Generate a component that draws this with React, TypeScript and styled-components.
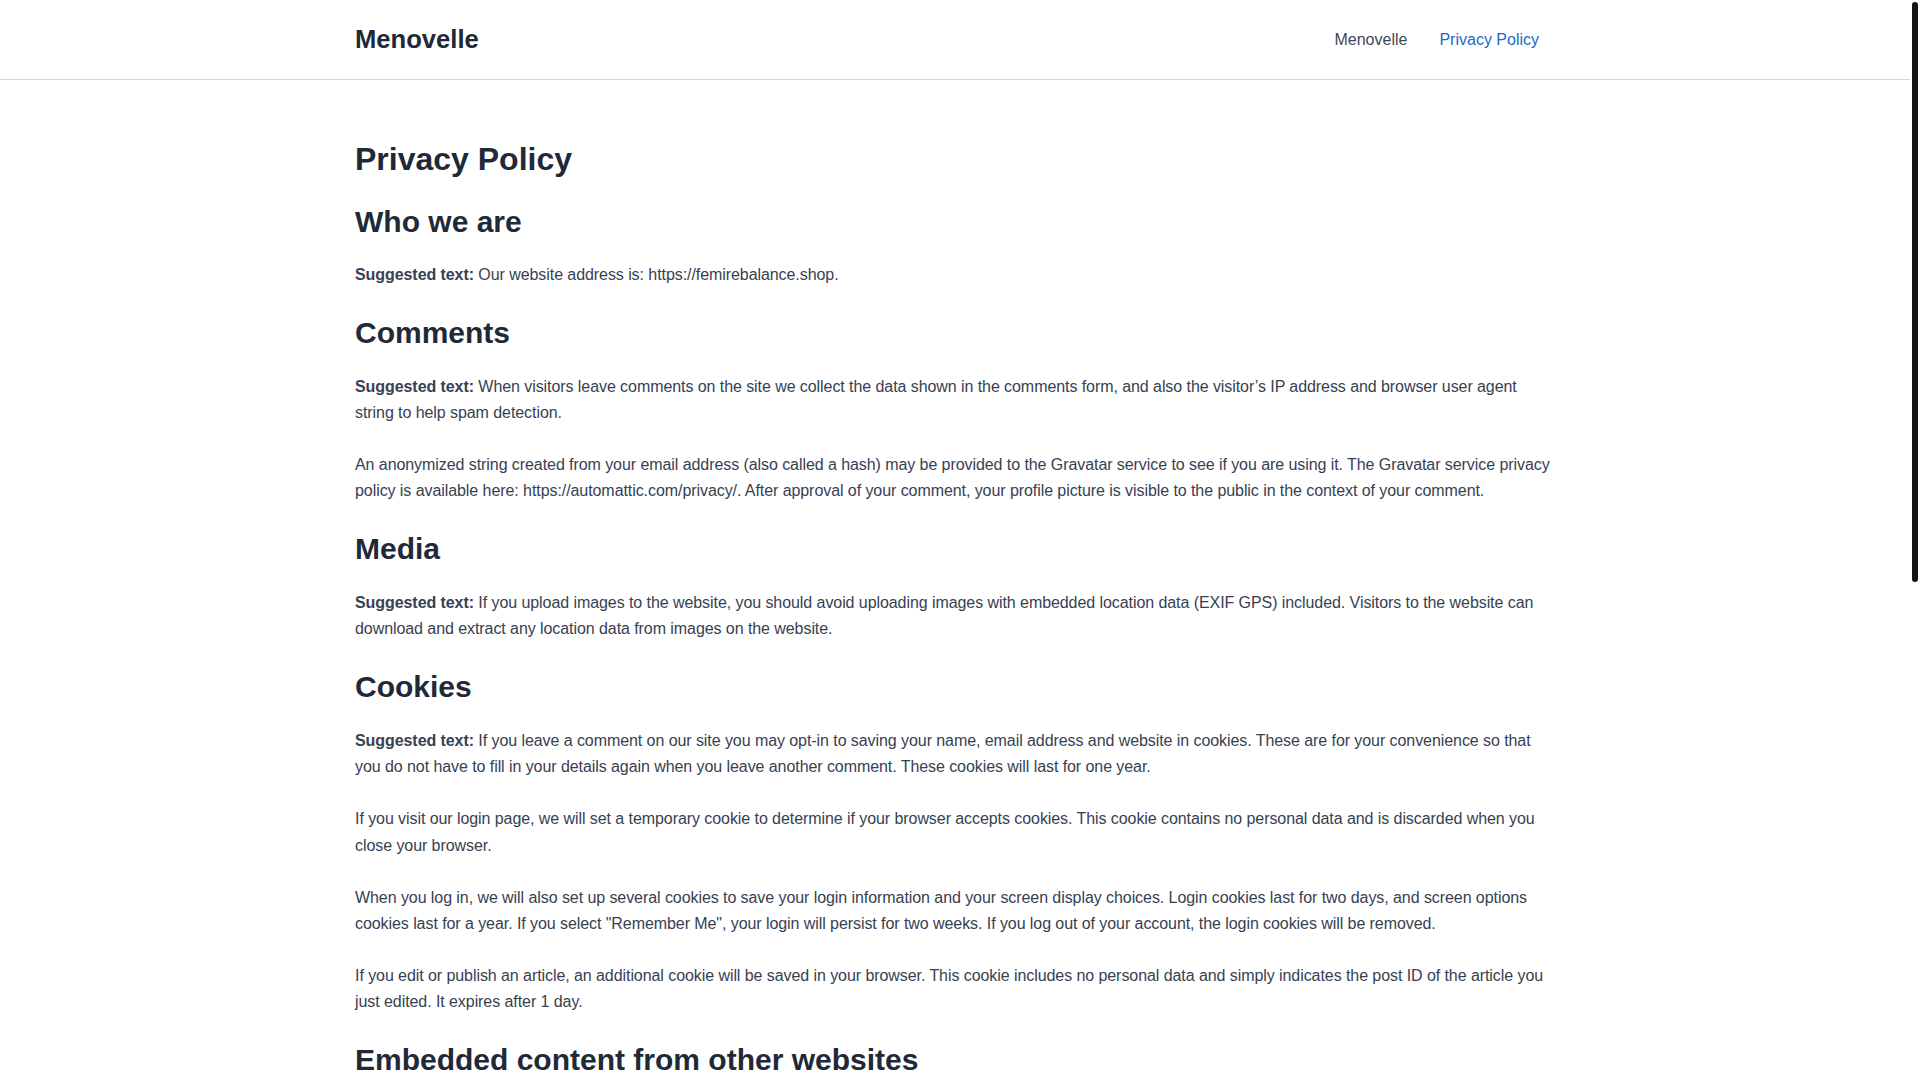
import styled, { createGlobalStyle } from 'styled-components'

const GlobalStyle = createGlobalStyle`
  html, body {
    margin: 0;
    padding: 0;
    background: #ffffff;
  }
  body {
    padding-right: 10px;
    font-family: "Liberation Sans", Arial, Helvetica, sans-serif;
    color: #374151;
    -webkit-font-smoothing: antialiased;
  }
`

type Section = {
  title: string
  paragraphs: { lead?: string; text: string }[]
}

const sections: Section[] = [
  {
    title: 'Who we are',
    paragraphs: [
      { lead: 'Suggested text:', text: 'Our website address is: https://femirebalance.shop.' },
    ],
  },
  {
    title: 'Comments',
    paragraphs: [
      {
        lead: 'Suggested text:',
        text: 'When visitors leave comments on the site we collect the data shown in the comments form, and also the visitor’s IP address and browser user agent string to help spam detection.',
      },
      {
        text: 'An anonymized string created from your email address (also called a hash) may be provided to the Gravatar service to see if you are using it. The Gravatar service privacy policy is available here: https://automattic.com/privacy/. After approval of your comment, your profile picture is visible to the public in the context of your comment.',
      },
    ],
  },
  {
    title: 'Media',
    paragraphs: [
      {
        lead: 'Suggested text:',
        text: 'If you upload images to the website, you should avoid uploading images with embedded location data (EXIF GPS) included. Visitors to the website can download and extract any location data from images on the website.',
      },
    ],
  },
  {
    title: 'Cookies',
    paragraphs: [
      {
        lead: 'Suggested text:',
        text: 'If you leave a comment on our site you may opt-in to saving your name, email address and website in cookies. These are for your convenience so that you do not have to fill in your details again when you leave another comment. These cookies will last for one year.',
      },
      {
        text: 'If you visit our login page, we will set a temporary cookie to determine if your browser accepts cookies. This cookie contains no personal data and is discarded when you close your browser.',
      },
      {
        text: 'When you log in, we will also set up several cookies to save your login information and your screen display choices. Login cookies last for two days, and screen options cookies last for a year. If you select "Remember Me", your login will persist for two weeks. If you log out of your account, the login cookies will be removed.',
      },
      {
        text: 'If you edit or publish an article, an additional cookie will be saved in your browser. This cookie includes no personal data and simply indicates the post ID of the article you just edited. It expires after 1 day.',
      },
    ],
  },
  {
    title: 'Embedded content from other websites',
    paragraphs: [
      {
        lead: 'Suggested text:',
        text: 'Articles on this site may include embedded content (e.g. videos, images, articles, etc.). Embedded content from other websites behaves in the exact same way as if the visitor has visited the other website.',
      },
      {
        text: 'These websites may collect data about you, use cookies, embed additional third-party tracking, and monitor your interaction with that embedded content, including tracking your interaction with the embedded content if you have an account and are logged in to that website.',
      },
    ],
  },
  {
    title: 'Who we share your data with',
    paragraphs: [
      {
        lead: 'Suggested text:',
        text: 'If you request a password reset, your IP address will be included in the reset email.',
      },
    ],
  },
  {
    title: 'How long we retain your data',
    paragraphs: [
      {
        lead: 'Suggested text:',
        text: 'If you leave a comment, the comment and its metadata are retained indefinitely. This is so we can recognize and approve any follow-up comments automatically instead of holding them in a moderation queue.',
      },
      {
        text: 'For users that register on our website (if any), we also store the personal information they provide in their user profile. All users can see, edit, or delete their personal information at any time (except they cannot change their username). Website administrators can also see and edit that information.',
      },
    ],
  },
  {
    title: 'What rights you have over your data',
    paragraphs: [
      {
        lead: 'Suggested text:',
        text: 'If you have an account on this site, or have left comments, you can request to receive an exported file of the personal data we hold about you, including any data you have provided to us. You can also request that we erase any personal data we hold about you. This does not include any data we are obliged to keep for administrative, legal, or security purposes.',
      },
    ],
  },
  {
    title: 'Where your data is sent',
    paragraphs: [
      {
        lead: 'Suggested text:',
        text: 'Visitor comments may be checked through an automated spam detection service.',
      },
    ],
  },
]

export default function App() {
  return (
    <>
      <GlobalStyle />
      <Header>
        <HeaderInner>
          <Logo href="#">Menovelle</Logo>
          <Nav>
            <NavLink href="#">Menovelle</NavLink>
            <NavLink href="#" $active>
              Privacy Policy
            </NavLink>
          </Nav>
        </HeaderInner>
      </Header>

      <Main>
        <Title>Privacy Policy</Title>
        {sections.map((section) => (
          <div key={section.title}>
            <Heading>{section.title}</Heading>
            {section.paragraphs.map((p, index) => (
              <Paragraph key={index}>
                {p.lead && <strong>{p.lead}</strong>}
                {p.lead ? ' ' : ''}
                {p.text}
              </Paragraph>
            ))}
          </div>
        ))}
      </Main>

      <Footer>
        <FooterInner>© 2025 Menovelle. All rights reserved.</FooterInner>
      </Footer>

      <ScrollThumb />
    </>
  )
}

const Header = styled.header`
  background: #ffffff;
  border-bottom: 1px solid #d1d5db;
`

const HeaderInner = styled.div`
  max-width: 1200px;
  margin: 0 auto;
  height: 79px;
  display: flex;
  align-items: center;
  justify-content: space-between;
`

const Logo = styled.a`
  font-size: 25.6px;
  font-weight: 700;
  color: #1f2937;
  text-decoration: none;
`

const Nav = styled.nav`
  display: flex;
  align-items: center;
`

const NavLink = styled.a<{ $active?: boolean }>`
  padding: 0 16px;
  font-size: 16px;
  color: ${({ $active }) => ($active ? '#1d6cc0' : '#3f4856')};
  text-decoration: none;
`

const Main = styled.main`
  max-width: 1200px;
  margin: 0 auto;
  padding: 59px 0 40px;
`

const Title = styled.h1`
  font-size: 32px;
  line-height: 1.3;
  font-weight: 700;
  color: #1f2937;
  margin: 0;
`

const Heading = styled.h2`
  font-size: 30px;
  line-height: 1.25;
  font-weight: 700;
  color: #1f2937;
  margin: 22px 0 22px;
`

const Paragraph = styled.p`
  font-size: 16px;
  line-height: 26.4px;
  letter-spacing: -0.07px;
  color: #374151;
  margin: 0 0 25.6px;

  strong {
    font-weight: 700;
  }
`

const Footer = styled.footer`
  border-top: 1px solid #d1d5db;
`

const FooterInner = styled.div`
  max-width: 1200px;
  margin: 0 auto;
  padding: 28px 0;
  font-size: 14px;
  color: #6b7280;
  text-align: center;
`

const ScrollThumb = styled.div`
  position: fixed;
  top: 2px;
  right: 2px;
  width: 6px;
  height: 580px;
  border-radius: 3px;
  background: #141414;
`
